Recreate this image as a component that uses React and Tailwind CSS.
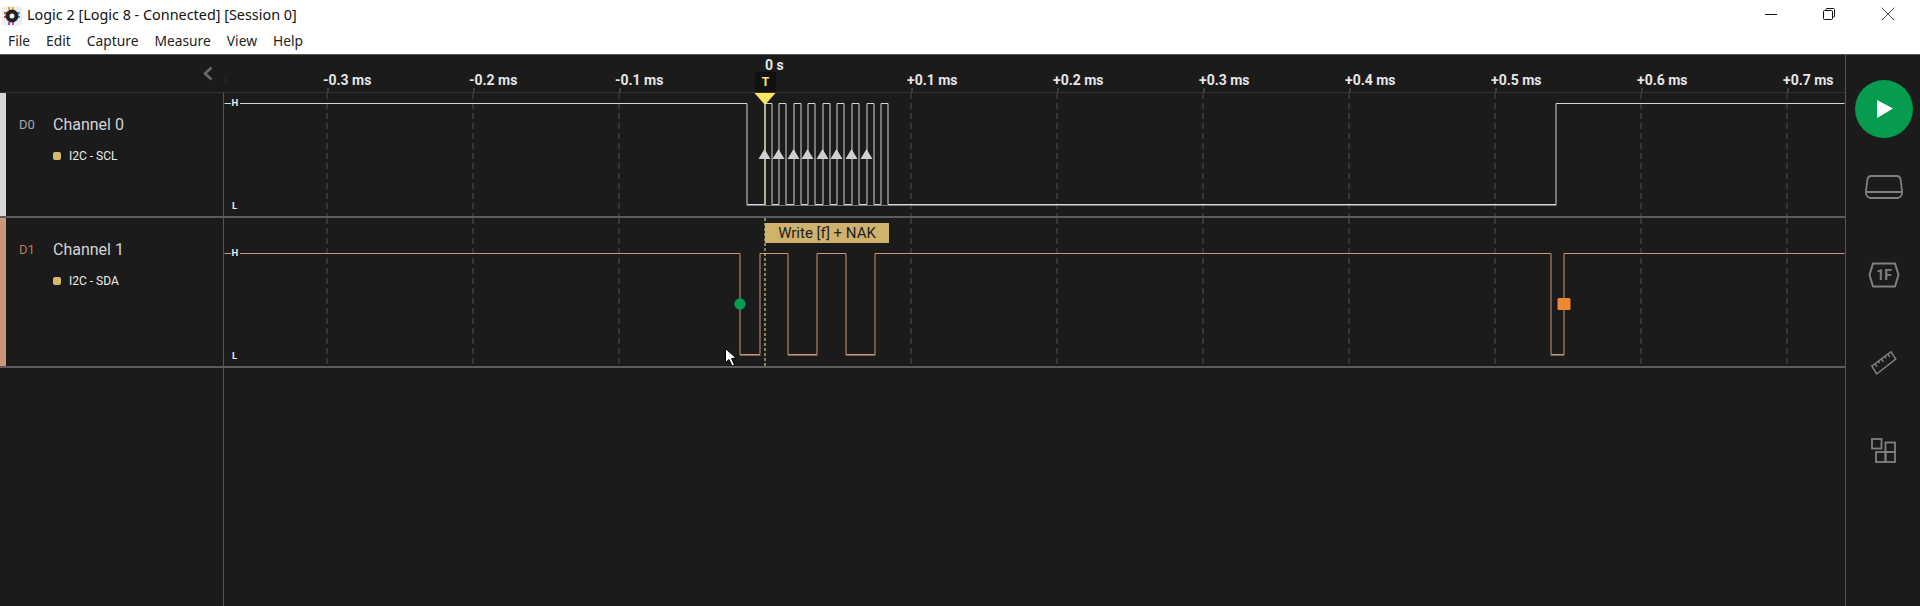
import { X } from 'lucide-react';

const MENU = ['File', 'Edit', 'Capture', 'Measure', 'View', 'Help'];
const TICKS = ['-0.3 ms', '-0.2 ms', '-0.1 ms', '', '+0.1 ms', '+0.2 ms', '+0.3 ms', '+0.4 ms', '+0.5 ms', '+0.6 ms', '+0.7 ms'];
const GRID_X = [327, 473, 619, 911, 1057, 1203, 1349, 1495, 1641, 1787];

// rising / falling edges of the two captured signals, in page pixels
const SCL_EDGES = [747.5, 765.5, 772.5, 779.5, 786.5, 794.5, 801.5, 808.5, 815.5, 823.5, 830.5, 837.5, 844.5, 852.5, 859.5, 867.5, 874.5, 881.5, 888.5, 1556.5];
const SDA_EDGES = [740.5, 760.5, 788.5, 817.5, 846.5, 875.5, 1551.5, 1564.5];
const SCL_ARROWS = [765, 779, 794, 808, 823, 837, 852, 867];

function wavePath(edges, high, low) {
  let d = `M225 ${high}`;
  let y = high;
  for (const x of edges) {
    const next = y === high ? low : high;
    d += ` H${x} V${next}`;
    y = next;
  }
  return d + ' H1845';
}

function GridLines({ top, bottom }) {
  return GRID_X.map((x) => (
    <line key={x} x1={x + 0.5} x2={x + 0.5} y1={top} y2={bottom} stroke="#3f3f42" strokeWidth="1.5" strokeDasharray="6 4" />
  ));
}

function Levels({ high, low }) {
  return (
    <g fontFamily="Roboto, sans-serif" fontWeight="700" fontSize="9.5" fill="#ececec">
      <rect x="231.5" y={high - 6} width="9" height="12" fill="#1b1b1b" />
      <text x="232" y={high + 2.5}>H</text>
      <text x="232.5" y={low + 4}>L</text>
    </g>
  );
}

function ChannelInfo({ id, name, analyzer, barColor, idColor }) {
  return (
    <div className="flex w-[224px] shrink-0 border-r border-[#55555a]">
      <div className={`w-[6px] shrink-0 ${barColor}`} />
      <div className="flex flex-col pt-[22px] pl-[13px]">
        <div className="flex h-[20px] items-center">
          <span className={`w-[34px] text-[13px] ${idColor}`}>{id}</span>
          <span className="text-[16px] text-[#d2d4d6]">{name}</span>
        </div>
        <div className="mt-[12px] flex h-[18px] items-center pl-[34px]">
          <span className="h-[8px] w-[8px] rounded-[2px] bg-[#d4b96e]" />
          <span className="ml-[8px] text-[12px] text-[#ededed]">{analyzer}</span>
        </div>
      </div>
    </div>
  );
}

function Logo() {
  return (
    <svg width="24" height="24" viewBox="0 0 24 24" className="shrink-0">
      <rect x="2" y="3" width="20" height="20" rx="4" fill="#eeeef0" />
      <g strokeWidth="2">
        <path d="M9 4v3" stroke="#f0a020" />
        <path d="M13 4v3" stroke="#f5c020" />
        <path d="M9 19v3" stroke="#8a50d8" />
        <path d="M13 19v3" stroke="#c050d0" />
        <path d="M4 10h3M4 14h3" stroke="#e04040" />
        <path d="M17 10h3M17 14h3" stroke="#30a8e0" />
      </g>
      <circle cx="12" cy="13" r="6.5" fill="#222" />
      <circle cx="12" cy="13" r="2.5" fill="#eeeef0" />
    </svg>
  );
}

function RestoreIcon() {
  return (
    <svg width="14" height="14" viewBox="0 0 14 14" fill="none" stroke="#111" strokeWidth="1">
      <rect x="1.5" y="3.5" width="9" height="9" rx="1" />
      <path d="M4 3.500V2.500a1 1 0 0 1 1-1h6.500a1 1 0 0 1 1 1V9a1 1 0 0 1-1 1h-1" />
    </svg>
  );
}

function DeviceIcon() {
  return (
    <svg width="38" height="26" viewBox="0 0 38 26" fill="none" stroke="#808080" strokeWidth="1.8" strokeLinejoin="round">
      <path d="M6 2h26a4 4 0 0 1 3.500 3l1.500 12a6 6 0 0 1-4 7H5a6 6 0 0 1-4-7L2.500 5A4 4 0 0 1 6 2Z" />
      <path d="M1.500 18h35" />
    </svg>
  );
}

function ByteIcon() {
  return (
    <svg width="32" height="26" viewBox="0 0 32 26" fill="none">
      <path d="M5 1.500h22L30.500 13 27 24.500H5L1.500 13Z" stroke="#808080" strokeWidth="2" strokeLinejoin="round" />
      <text x="16" y="18" textAnchor="middle" fontFamily="Roboto, sans-serif" fontWeight="700" fontSize="14" fill="#808080">1F</text>
    </svg>
  );
}

function RulerIcon() {
  return (
    <svg width="26" height="25" viewBox="0 0 26 25" fill="none" stroke="#808080" strokeWidth="1.500">
      <path d="M.8 15 20 .8 24.700 8 5.700 23Z" />
      <path d="M4 12.600l2 3M7.200 10.200l1.300 2M10.400 7.800l2 3M13.600 5.400l1.300 2M16.800 3.100l2 3" />
    </svg>
  );
}

function BlocksIcon() {
  return (
    <svg width="25" height="25" viewBox="0 0 25 25" fill="none" stroke="#808080" strokeWidth="1.800">
      <rect x="1" y="1" width="9.500" height="9.500" />
      <rect x="5" y="14" width="9.500" height="10" />
      <rect x="14.500" y="4.500" width="9.500" height="9.500" />
      <rect x="14.500" y="14" width="9.500" height="10" />
    </svg>
  );
}

export default function App() {
  return (
    <div className="flex h-[606px] w-[1920px] flex-col overflow-hidden bg-white font-['Noto_Sans',sans-serif]">
      {/* Window title */}
      <div className="flex h-[30px] items-center">
        <Logo />
        <span className="ml-[3px] text-[14.4px] text-[#111]">Logic 2 [Logic 8 - Connected] [Session 0]</span>
        <div className="ml-auto flex items-center pb-[2px] pr-[3px]">
          <div className="flex w-[58.500px] justify-center"><span className="h-px w-[12px] bg-[#111]" /></div>
          <div className="flex w-[58.500px] justify-center"><RestoreIcon /></div>
          <div className="flex w-[58.500px] justify-center"><X size={24} strokeWidth={0.75} color="#111" /></div>
        </div>
      </div>
      <div className="flex h-[24px] items-center gap-[16px] pb-px pl-[8px] text-[13.8px] text-[#222]">
        {MENU.map((m) => <span key={m}>{m}</span>)}
      </div>
      <div className="h-px bg-[#555]" />

      <div className="flex min-h-0 flex-1 bg-[#1b1b1b] font-['Roboto',sans-serif]">
        <div className="flex min-w-0 flex-1 flex-col">
          {/* Time ruler */}
          <div className="relative flex h-[38px] shrink-0 border-b border-[#333336]">
            <div className="relative flex w-[224px] shrink-0 items-center justify-end">
              <svg width="10" height="15" viewBox="0 0 10 15" fill="none" stroke="#6a6a6a" strokeWidth="2.500" className="mr-[11px] mt-[-1px]">
                <path d="M8.500 1.500 2 7.500l6.500 6" />
              </svg>
              <span className="absolute right-[-2px] top-[21px] text-[7px] leading-[8px] text-[#777]">:</span>
            </div>
            <div className="flex pl-[102px]">
              {TICKS.map((t, i) => (
                <div key={i} className="relative h-full w-[146px] shrink-0">
                  <span className="absolute left-[-3px] top-[13px] whitespace-nowrap text-[14px] font-bold leading-[24px] text-[#e6e6e6]">{t}</span>
                  {t && <span className="absolute bottom-0 left-[1px] h-[4px] w-[2px] bg-[#3f3f42]" />}
                </div>
              ))}
            </div>
            {/* Trigger marker */}
            <span className="absolute left-[765px] top-[2px] text-[14px] font-bold leading-[16px] text-[#e6e6e6]">0 s</span>
            <span className="absolute left-[755px] top-[17px] flex h-[20px] w-[21px] items-center justify-center bg-[#111] text-[12px] font-bold text-[#ffe566]">T</span>
          </div>

          {/* Channel 0 */}
          <div className="flex h-[125px] shrink-0 border-b-2 border-[#5c5c60]">
            <ChannelInfo id="D0" name="Channel 0" analyzer="I2C - SCL" barColor="bg-[#d6d6d6]" idColor="text-[#a8a8a8]" />
            <svg className="block flex-1" viewBox="225 93 1620 123" width="1620" height="123">
              <GridLines top={93} bottom={216} />
              <path d={wavePath(SCL_EDGES, 103.5, 204.5)} fill="none" stroke="#d6d6d6" strokeWidth="1" />
              <path d="M747 205.500H1557" stroke="#777" strokeWidth="1" />
              <Levels high={103.5} low={205} />
              <path d="M765.500 105V205" stroke="#efe8b8" strokeWidth="1" />
              <path d="M755 93h21l-10.500 12Z" fill="#ffe566" />
              {SCL_ARROWS.map((x) => (
                <path key={x} d={`M${x} 149l6 10h-12Z`} fill="#d0d0d0" />
              ))}
            </svg>
          </div>

          {/* Channel 1 */}
          <div className="relative flex h-[150px] shrink-0 border-b-2 border-[#5c5c60]">
            <ChannelInfo id="D1" name="Channel 1" analyzer="I2C - SDA" barColor="bg-[#c99679]" idColor="text-[#b9765a]" />
            <svg className="block flex-1" viewBox="225 218 1620 148" width="1620" height="148">
              <GridLines top={218} bottom={366} />
              <path d={wavePath(SDA_EDGES, 253.5, 354.5)} fill="none" stroke="#c99679" strokeWidth="1" />
              <path d="M740 355.500h21M788 355.500h30M846 355.500h30M1551 355.500h14" stroke="#7a5f50" strokeWidth="1" />
              <Levels high={253.5} low={355} />
              <path d="M765.500 218V366" stroke="#f5eaa0" strokeWidth="1" strokeDasharray="3 2" />
              <circle cx="740.500" cy="304" r="5.700" fill="#059c4f" />
              <rect x="1558" y="298" width="13" height="12" rx="1.500" fill="#ed8833" />
              {/* mouse pointer */}
              <path d="M726 348.500v14l3.500-3 3 6.500 2.500-1.200-3-6.300 4.500-.4Z" fill="#fff" stroke="#000" strokeWidth="1" />
            </svg>
            <div className="absolute left-[765px] top-[5px] flex h-[20px] w-[124px] items-center justify-center bg-[#cfb26c] text-[15px] text-[#222]">
              Write [f] + NAK
            </div>
          </div>

          {/* Empty space under the channels */}
          <div className="flex-1">
            <div className="h-full w-[224px] border-r border-[#55555a]" />
          </div>
        </div>

        {/* Right toolbar */}
        <div className="flex w-[75px] shrink-0 flex-col items-center border-l border-[#55555a] pl-px">
          <div className="mt-[25px] flex h-[58px] w-[58px] items-center justify-center rounded-full bg-[#059c4f]">
            <svg width="18" height="20" viewBox="0 0 18 20" className="ml-[3px]"><path d="M1 1 17 9.500 1 19Z" fill="#fff" /></svg>
          </div>
          <div className="mt-[36px]"><DeviceIcon /></div>
          <div className="mt-[62px]"><ByteIcon /></div>
          <div className="mt-[63px]"><RulerIcon /></div>
          <div className="mt-[62px]"><BlocksIcon /></div>
        </div>
      </div>
    </div>
  );
}
